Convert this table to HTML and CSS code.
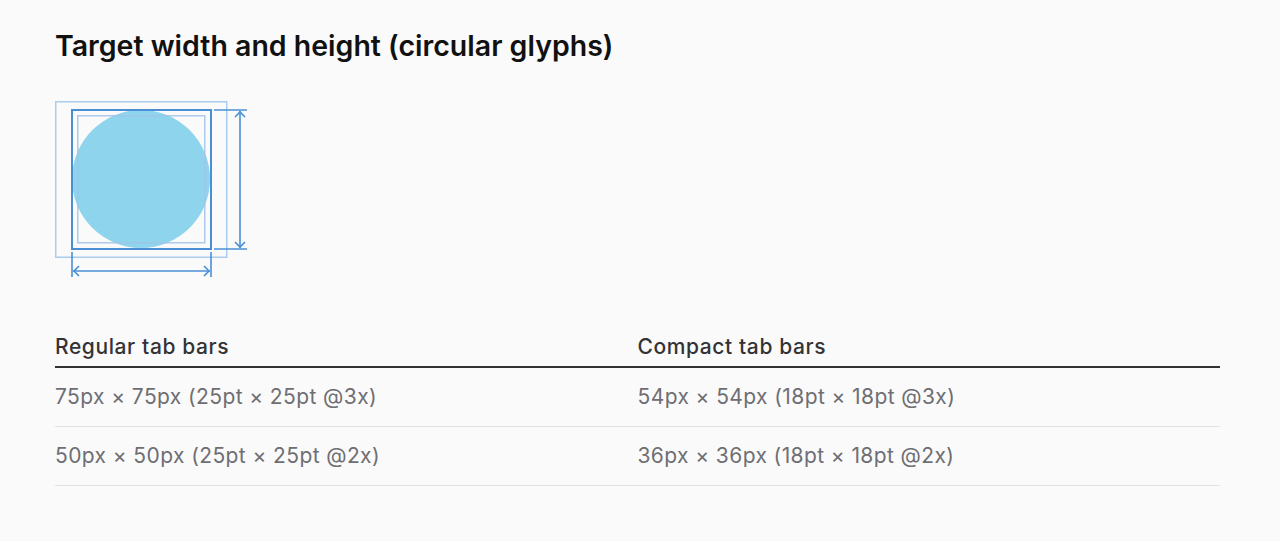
FILE: index.html
```html
<!DOCTYPE html>
<html>
<head>
<meta charset="utf-8">
<link rel="stylesheet" href="styles.css">
</head>
<body>
<main class="page">
  <h2 class="title">Target width and height (circular glyphs)</h2>
  <figure class="diagram">
    <svg width="196" height="180" viewBox="54 100 196 180" xmlns="http://www.w3.org/2000/svg">
      <rect x="55.75" y="101.75" width="171" height="155.5" fill="none" stroke="#a9cdee" stroke-width="1.5"/>
      <circle cx="141" cy="179" r="69" fill="#8dd4ec"/>
      <rect x="77.75" y="115.75" width="127" height="127" fill="none" stroke="#9fc3ea" stroke-opacity="0.85" stroke-width="1.5"/>
      <rect x="72" y="110" width="139" height="139" fill="none" stroke="#4a8fd6" stroke-width="2"/>
      <g stroke="#4a8fd6" stroke-width="1.6" fill="none">
        <line x1="214" y1="110" x2="247" y2="110"/>
        <line x1="214" y1="249" x2="247" y2="249"/>
        <line x1="240" y1="111" x2="240" y2="248"/>
        <polyline points="235,117 240,112 245,117"/>
        <polyline points="235,242 240,247 245,242"/>
        <line x1="72" y1="252" x2="72" y2="277"/>
        <line x1="211" y1="252" x2="211" y2="277"/>
        <line x1="73" y1="271" x2="210" y2="271"/>
        <polyline points="79,266 74,271 79,276"/>
        <polyline points="204,266 209,271 204,276"/>
      </g>
    </svg>
  </figure>
  <table class="sizes">
    <thead>
      <tr><th>Regular tab bars</th><th>Compact tab bars</th></tr>
    </thead>
    <tbody>
      <tr><td>75px × 75px (25pt × 25pt @3x)</td><td>54px × 54px (18pt × 18pt @3x)</td></tr>
      <tr><td>50px × 50px (25pt × 25pt @2x)</td><td>36px × 36px (18pt × 18pt @2x)</td></tr>
    </tbody>
  </table>
</main>
</body>
</html>
```

FILE: styles.css
```css
html, body {
  margin: 0;
  padding: 0;
  background: #fafafa;
}
body {
  font-family: Inter, "Noto Sans", "Liberation Sans", sans-serif;
  color: #1d1d1f;
}
.page {
  width: 1165px;
  padding: 27px 0 0 55px;
}
.title {
  margin: 0;
  font-size: 28.5px;
  line-height: 38px;
  font-weight: 600;
  color: #111;
  letter-spacing: 0;
}
.diagram {
  margin: 0;
  padding-top: 35px;
  height: 180px;
  margin-left: -1px;
}
.diagram svg {
  display: block;
}
.sizes {
  width: 100%;
  border-collapse: collapse;
  margin-top: 55px;
  table-layout: fixed;
}
.sizes th {
  text-align: left;
  font-weight: 500;
  font-size: 21px;
  line-height: 24px;
  letter-spacing: 0.6px;
  color: #333336;
  padding: 0 0 7px 0;
  border-bottom: 2px solid #333;
}
.sizes td {
  font-size: 21px;
  line-height: 24px;
  letter-spacing: 0.4px;
  color: #6e6e73;
  padding: 17px 0 17px 0;
  border-bottom: 1px solid #e3e3e3;
}
```
